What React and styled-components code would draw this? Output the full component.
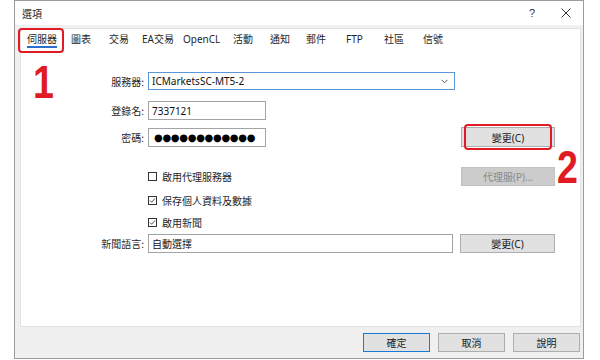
import React from "react";
import styled, { createGlobalStyle } from "styled-components";

const Global = createGlobalStyle`
  html, body { margin: 0; padding: 0; background: #ffffff; }
  body { font-family: "Noto Sans", "Noto Sans CJK TC", sans-serif; }
  * { box-sizing: border-box; }
`;

const Page = styled.div`
  width: 600px;
  height: 360px;
  padding-left: 14px;
  background: #ffffff;
`;

const Window = styled.div`
  position: relative;
  width: 570px;
  height: 359px;
  border: 1px solid #9c9c9c;
  background: #f0f0f0;
  display: flex;
  flex-direction: column;
  font-family: "Noto Sans", "Noto Sans CJK TC", sans-serif;
  font-size: 10px;
  color: #1a1a1a;
`;

const TitleBar = styled.div`
  height: 24px;
  background: #ffffff;
  display: flex;
  align-items: center;
  padding-left: 7px;
  flex: none;
`;

const Title = styled.div`
  flex: 1;
  font-family: "Noto Sans CJK TC", sans-serif;
  font-size: 10px;
  color: #222;
`;

const TitleButton = styled.div`
  width: 34px;
  height: 24px;
  display: flex;
  align-items: center;
  justify-content: center;
  font-size: 11px;
  color: #333;
  font-family: "Liberation Sans", sans-serif;
`;

const Body = styled.div`
  flex: 1;
  padding: 3px 2px 0 5px;
  display: flex;
`;

const Panel = styled.div`
  flex: 1;
  background: #ffffff;
  border: 1px solid #e2e2e2;
  display: flex;
  flex-direction: column;
`;

const TabRow = styled.div`
  height: 21px;
  display: flex;
  padding-left: 6px;
  flex: none;
`;

const Tab = styled.div`
  width: ${(p) => (p.$w ? `${p.$w}px` : "auto")};
  padding-top: 4px;
  font-family: "Noto Sans", "Noto Sans CJK TC", sans-serif;
  font-size: 10px;
  line-height: 12px;
  color: #1f1f1f;
`;

const TabLabel = styled.span`
  display: inline-block;
  padding-bottom: 1px;
  border-bottom: 2px solid ${(p) => (p.$active ? "#2a6fcf" : "transparent")};
`;

const Form = styled.div`
  display: flex;
  flex-direction: column;
  padding-top: 22px;
`;

const Row = styled.div`
  display: grid;
  grid-template-columns: 127px 307px 100px;
  align-items: center;
  height: ${(p) => p.$h}px;
  margin-top: ${(p) => p.$mt || 0}px;
`;

const Label = styled.div`
  text-align: right;
  padding-right: 4px;
  font-family: "Noto Sans CJK TC", sans-serif;
  font-size: 10px;
  color: #1f1f1f;
`;

const Field = styled.div`
  width: ${(p) => (p.$w ? `${p.$w}px` : "100%")};
  height: ${(p) => p.$h || 19}px;
  border: 1px solid ${(p) => (p.$focus ? "#5a98da" : "#a4a4a4")};
  background: #ffffff;
  display: flex;
  align-items: center;
  padding-left: 3px;
  padding-right: 6px;
  font-family: "Noto Sans", "Noto Sans CJK TC", sans-serif;
  font-size: 10px;
  color: #111;
  overflow: hidden;
`;

const FieldText = styled.span`
  flex: 1;
`;

const Dots = styled.span`
  font-family: "DejaVu Sans", sans-serif;
  font-size: 10px;
  letter-spacing: -0.3px;
  padding-left: 2px;
  white-space: nowrap;
  color: #000;
`;

const Button = styled.button`
  justify-self: end;
  width: ${(p) => p.$w || 94}px;
  height: ${(p) => p.$h || 20}px;
  background: ${(p) => (p.disabled ? "#cccccc" : "#e1e1e1")};
  border: 1px solid ${(p) => (p.$primary ? "#1a7bd6" : p.disabled ? "#c2c2c2" : "#adadad")};
  color: ${(p) => (p.disabled ? "#8a8a8a" : "#1a1a1a")};
  font-family: "Noto Sans", "Noto Sans CJK TC", sans-serif;
  font-size: 10px;
  padding: 0;
  margin: 0;
  display: flex;
  align-items: center;
  justify-content: center;
`;

const Check = styled.label`
  display: flex;
  align-items: center;
  gap: 5px;
  font-family: "Noto Sans CJK TC", sans-serif;
  font-size: 10px;
  color: #1f1f1f;
`;

const Box = styled.span`
  width: 9px;
  height: 9px;
  border: 1px solid #333;
  background: #fff;
  display: flex;
  align-items: center;
  justify-content: center;
`;

const Footer = styled.div`
  height: 31px;
  flex: none;
  display: flex;
  justify-content: flex-end;
  gap: 8px;
  padding: 6px 3px 0 0;
`;

const Mark = styled.div`
  position: absolute;
  left: ${(p) => p.$x}px;
  top: ${(p) => p.$y}px;
  width: ${(p) => p.$w}px;
  height: ${(p) => p.$h}px;
  border: 2.5px solid #e01b24;
  border-radius: 4px;
  pointer-events: none;
`;

const Step = styled.div`
  position: absolute;
  left: ${(p) => p.$x}px;
  top: ${(p) => p.$y}px;
  font-family: "Liberation Sans", "DejaVu Sans", sans-serif;
  font-weight: 700;
  font-size: 47px;
  line-height: 1;
  color: #e01b24;
  transform: scaleX(0.8);
  transform-origin: left top;
`;

const CheckIcon = () => (
  <svg width="9" height="9" viewBox="0 0 9 9">
    <path d="M1.2 4.6 L3.4 6.8 L7.8 1.8" fill="none" stroke="#222" strokeWidth="1" />
  </svg>
);

const CheckBox = ({ checked, children }) => (
  <Check>
    <Box>{checked && <CheckIcon />}</Box>
    {children}
  </Check>
);

const tabs = [
  ["伺服器", 44],
  ["圖表", 38],
  ["交易", 33],
  ["EA交易", 41],
  ["OpenCL", 50],
  ["活動", 37],
  ["通知", 36],
  ["郵件", 40],
  ["FTP", 38],
  ["社區", 39],
  ["信號", 0],
];

export default function App() {
  return (
    <>
      <Global />
      <Page>
        <Window>
          <TitleBar>
            <Title>選項</Title>
            <TitleButton>?</TitleButton>
            <TitleButton>
              <svg width="10" height="10" viewBox="0 0 10 10">
                <path d="M0.5 0.5 L9.5 9.5 M9.5 0.5 L0.5 9.5" stroke="#333" strokeWidth="1" />
              </svg>
            </TitleButton>
          </TitleBar>
          <Body>
            <Panel>
              <TabRow>
                {tabs.map(([t, w], i) => (
                  <Tab key={t} $w={w}>
                    <TabLabel $active={i === 0}>{t}</TabLabel>
                  </Tab>
                ))}
              </TabRow>
              <Form>
                <Row $h={18}>
                  <Label>服務器:</Label>
                  <Field $h={18} $focus>
                    <FieldText>ICMarketsSC-MT5-2</FieldText>
                    <svg width="7" height="5" viewBox="0 0 7 5">
                      <path d="M0.5 0.8 L3.5 3.8 L6.5 0.8" fill="none" stroke="#444" strokeWidth="0.9" />
                    </svg>
                  </Field>
                  <span />
                </Row>
                <Row $h={19} $mt={11}>
                  <Label>登錄名:</Label>
                  <Field $w={118}>7337121</Field>
                  <span />
                </Row>
                <Row $h={20} $mt={7}>
                  <Label>密碼:</Label>
                  <Field $w={118}>
                    <Dots>●●●●●●●●●●●●</Dots>
                  </Field>
                  <Button>變更(C)</Button>
                </Row>
                <Row $h={19} $mt={20}>
                  <span />
                  <CheckBox>啟用代理服務器</CheckBox>
                  <Button $h={19} disabled>
                    代理服(P)...
                  </Button>
                </Row>
                <Row $h={16} $mt={6}>
                  <span />
                  <CheckBox checked>保存個人資料及數據</CheckBox>
                  <span />
                </Row>
                <Row $h={16} $mt={6}>
                  <span />
                  <CheckBox checked>啟用新聞</CheckBox>
                  <span />
                </Row>
                <Row $h={19} $mt={4}>
                  <Label>新聞語言:</Label>
                  <Field $w={305}>自動選擇</Field>
                  <Button $w={95} $h={19}>
                    變更(C)
                  </Button>
                </Row>
              </Form>
            </Panel>
          </Body>
          <Footer>
            <Button $w={67} $h={19} $primary>
              確定
            </Button>
            <Button $w={67} $h={19}>
              取消
            </Button>
            <Button $w={67} $h={19}>
              說明
            </Button>
          </Footer>
          <Mark $x={3} $y={27} $w={46} $h={25} />
          <Step $x={18} $y={57}>1</Step>
          <Mark $x={449} $y={123} $w={88} $h={26} />
          <Step $x={542} $y={142}>2</Step>
        </Window>
      </Page>
    </>
  );
}
